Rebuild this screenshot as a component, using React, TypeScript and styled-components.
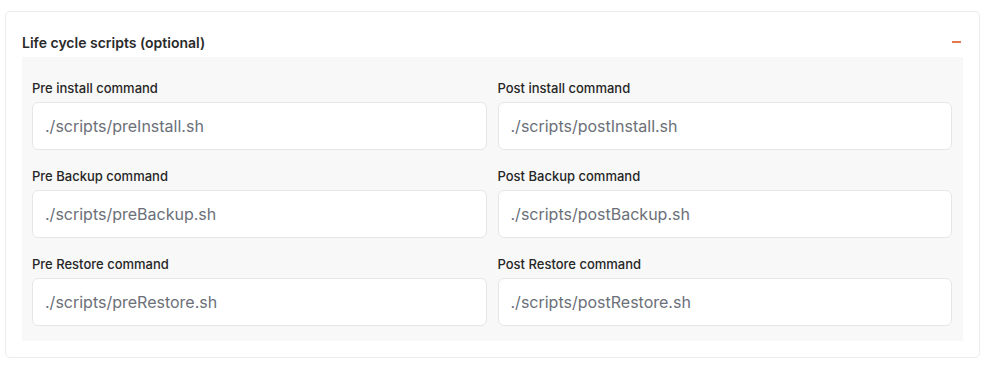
import styled, { createGlobalStyle } from 'styled-components'

const GlobalStyle = createGlobalStyle`
  body {
    margin: 0;
    background: #ffffff;
    font-family: Inter, 'Noto Sans', sans-serif;
  }
`

const Page = styled.div`
  padding: 11px 7px 0 5px;
`

const Card = styled.section`
  width: 975px;
  box-sizing: border-box;
  border: 1px solid #ececec;
  border-radius: 5px;
  padding: 20px 16px 16px 16px;
`

const Header = styled.div`
  display: flex;
  align-items: center;
  justify-content: space-between;
  height: 20px;
  margin-bottom: 5px;
`

const Title = styled.h3`
  margin: 0;
  font-size: 14px;
  font-weight: 600;
  color: #2a2a2a;
`

const Toggle = styled.button`
  border: none;
  background: transparent;
  padding: 0;
  margin-right: 1px;
  width: 10px;
  height: 10px;
  display: flex;
  align-items: center;
  cursor: pointer;
  &::before {
    content: '';
    display: block;
    width: 9px;
    height: 2px;
    background: #e2794a;
  }
`

const Panel = styled.div`
  background: #f8f8f8;
  padding: 23px 11px 15px 10px;
  display: grid;
  grid-template-columns: 1fr 1fr;
  column-gap: 11px;
  row-gap: 18px;
`

const Field = styled.label`
  display: flex;
  flex-direction: column;
  gap: 6px;
`

const Label = styled.span`
  font-size: 13px;
  line-height: 16px;
  font-weight: 500;
  color: #262626;
`

const Input = styled.input`
  height: 48px;
  box-sizing: border-box;
  border: 1px solid #e6e6e6;
  border-radius: 6px;
  background: #ffffff;
  padding: 0 12px;
  font-family: Inter, 'Noto Sans', sans-serif;
  font-size: 16px;
  color: #6b7078;
  outline: none;
  &::placeholder {
    color: #6b7078;
  }
`

const fields = [
  { label: 'Pre install command', value: './scripts/preInstall.sh' },
  { label: 'Post install command', value: './scripts/postInstall.sh' },
  { label: 'Pre Backup command', value: './scripts/preBackup.sh' },
  { label: 'Post Backup command', value: './scripts/postBackup.sh' },
  { label: 'Pre Restore command', value: './scripts/preRestore.sh' },
  { label: 'Post Restore command', value: './scripts/postRestore.sh' }
]

const App = () => {
  return (
    <Page>
      <GlobalStyle />
      <Card>
        <Header>
          <Title>Life cycle scripts (optional)</Title>
          <Toggle aria-label='Collapse' />
        </Header>
        <Panel>
          {fields.map((f) => (
            <Field key={f.label}>
              <Label>{f.label}</Label>
              <Input placeholder={f.value} />
            </Field>
          ))}
        </Panel>
      </Card>
    </Page>
  )
}

export default App
